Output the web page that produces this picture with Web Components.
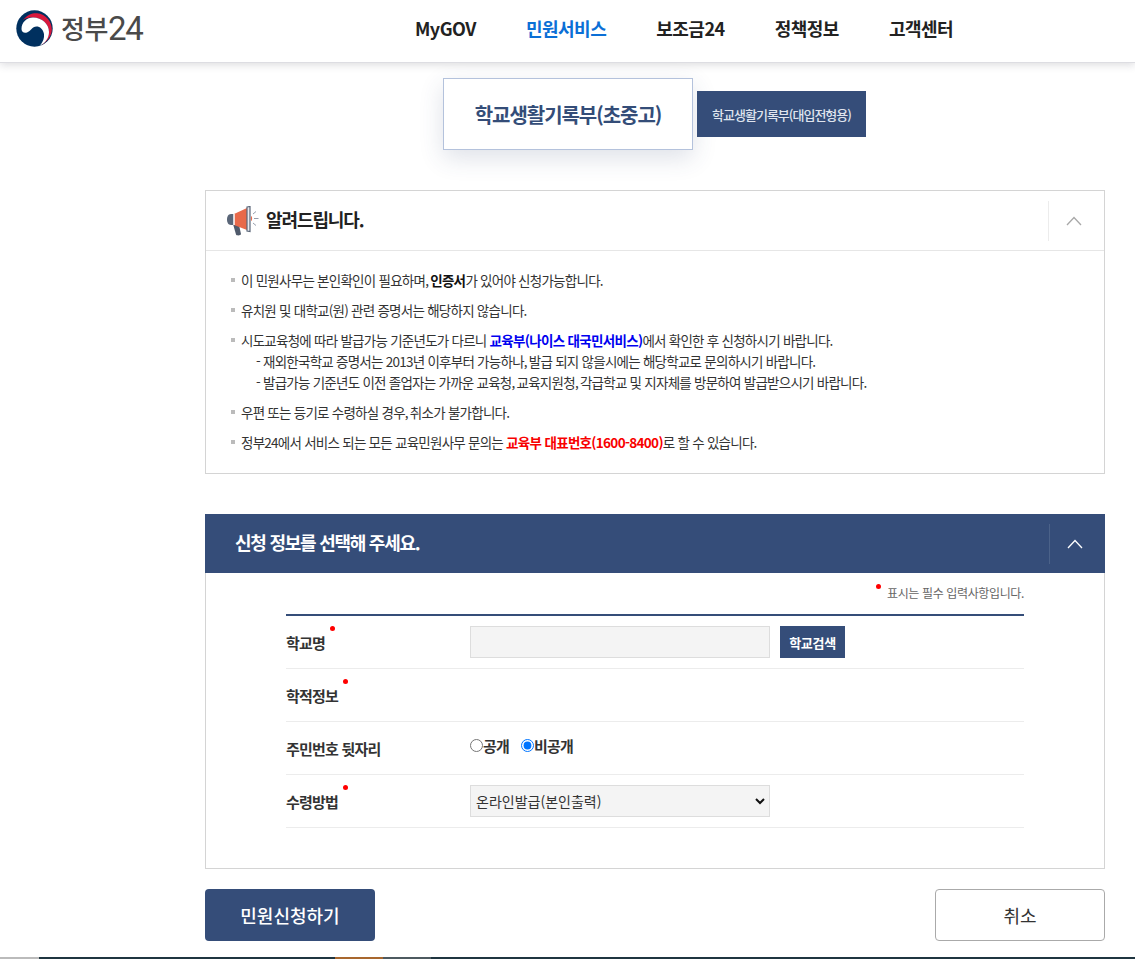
<!DOCTYPE html>
<html lang="ko">
<head>
<meta charset="utf-8">
<title>정부24</title>
<style>
    html, body { margin: 0; padding: 0; height: 959px; overflow: hidden; background: #fff; }
    body { font-family: "Noto Sans CJK KR", "Noto Sans", sans-serif; color: #222; }
    gov-page { height: 959px; }
</style>
</head>
<body>
<gov-page>
    <gov-header></gov-header>
    <gov-tabs></gov-tabs>
    <gov-notice></gov-notice>
    <gov-form></gov-form>
    <gov-actions></gov-actions>
    <gov-footer-strip></gov-footer-strip>
</gov-page>

<script>
const FONT = '"Noto Sans CJK KR", "Noto Sans", sans-serif';

function chevron(color) {
    return `<svg width="16" height="10" viewBox="0 0 16 10" fill="none"><path d="M1 9l7-7.5L15 9" stroke="${color}" stroke-width="1.3"/></svg>`;
}

class GovPage extends HTMLElement {
    constructor() {
        super();
        this.attachShadow({mode: 'open'}).innerHTML = `
            <style>
                :host { display: flex; flex-direction: column; position: relative; }
            </style>
            <slot></slot>
        `;
    }
}

class GovHeader extends HTMLElement {
    constructor() {
        super();
        this.attachShadow({mode: 'open'}).innerHTML = `
            <style>
                :host {
                    display: flex;
                    height: 62px;
                    background: #fff;
                    box-shadow: 0 1px 0 #dddde2, 0 3px 8px rgba(60,60,80,.18);
                    position: relative;
                    z-index: 2;
                    font-family: ${FONT};
                }
                .logo { display: flex; align-items: center; gap: 8px; width: 415px; padding-left: 16px; box-sizing: border-box; height: 56px; }
                .word { display: flex; align-items: center; color: #4a4a4a; line-height: 1; }
                .ko { font-size: 26px; font-weight: 500; letter-spacing: -.4px; }
                .num { font-family: Roboto, sans-serif; font-weight: 400; font-size: 33px; letter-spacing: -1.4px; }
                nav { display: flex; gap: 50px; height: 56px; align-items: center; font-size: 18px; font-weight: 700; color: #222; letter-spacing: -.5px; }
                nav .on { color: #0b6fd6; }
            </style>
            <div class="logo">
                <svg width="37" height="37" viewBox="0 0 37 37">
                    <circle cx="18.5" cy="18.5" r="18.2" fill="#00305f"/>
                    <path d="M7 10C11 4.500 17 2.800 21 3.200 30 4 35.800 11.500 35.800 19.500 35.800 26 31 32 25 35.300 29.500 32 33 27 33 22 33 14 26 7.500 17 7.500 13 7.500 10 8 7 10z" fill="#d8183c"/>
                    <path d="M5.500 19C5.500 12 11 7.500 17 7.500 26 7.500 33 14 33 22 33 28 29.500 33 24 35.500 27 32 28.500 28 28 24 27 19 24 16.500 20.500 16.500 16 16.500 15 21 11 22.500 8 23.500 5.500 22 5.500 19z" fill="#fff"/>
                </svg>
                <div class="word"><span class="ko">정부</span><span class="num">24</span></div>
            </div>
            <nav>
                <span>MyGOV</span>
                <span class="on">민원서비스</span>
                <span>보조금24</span>
                <span>정책정보</span>
                <span>고객센터</span>
            </nav>
        `;
    }
}

class GovTabs extends HTMLElement {
    constructor() {
        super();
        this.attachShadow({mode: 'open'}).innerHTML = `
            <style>
                :host {
                    display: flex;
                    align-items: center;
                    gap: 4px;
                    margin: 16px 0 40px 443px;
                    height: 72px;
                    font-family: ${FONT};
                }
                .active {
                    box-sizing: border-box;
                    width: 250px;
                    height: 72px;
                    display: flex; align-items: center; justify-content: center;
                    background: #fff;
                    border: 1px solid #b4c2dc;
                    box-shadow: 0 8px 24px rgba(50,70,110,.16);
                    color: #344d78;
                    font-size: 20px;
                    font-weight: 700;
                    letter-spacing: -1.05px;
                }
                .other {
                    width: 169px;
                    height: 46px;
                    display: flex; align-items: center; justify-content: center;
                    background: #354d79;
                    color: #dfe4ee;
                    font-size: 13px;
                    font-weight: 500;
                    letter-spacing: -1px;
                }
            </style>
            <div class="active">학교생활기록부(초중고)</div>
            <div class="other">학교생활기록부(대입전형용)</div>
        `;
    }
}

class GovNotice extends HTMLElement {
    constructor() {
        super();
        this.attachShadow({mode: 'open'}).innerHTML = `
            <style>
                :host {
                    display: block;
                    box-sizing: border-box;
                    width: 900px;
                    height: 284px;
                    margin-left: 205px;
                    border: 1px solid #d4d4d4;
                    font-family: ${FONT};
                    color: #333;
                }
                header {
                    display: flex;
                    align-items: center;
                    height: 59px;
                    border-bottom: 1px solid #e6e6e6;
                    padding-left: 20px;
                }
                h2 { margin: 0 0 0 6px; padding-bottom: 3px; font-size: 18px; font-weight: 700; letter-spacing: -1.1px; color: #222; flex: 1; }
                .toggle { box-sizing: border-box; width: 56px; height: 40px; padding-right: 5px; border-left: 1px solid #ececec; display: flex; align-items: center; justify-content: center; }
                ul { margin: 0; padding: 19px 0 0 25px; list-style: none; font-size: 13.500px; letter-spacing: -.75px; line-height: 21px; }
                li { position: relative; padding-left: 10px; margin-bottom: 9px; }
                li::before { content: ""; position: absolute; left: 0; top: 8px; width: 4px; height: 4px; background: #bbb; }
                b { color: #111; letter-spacing: -.68px; }
                i { font-style: normal; letter-spacing: -1.8px; }
                .blue { color: #0000f0; }
                .red { color: #f80000; }
                .sub { display: block; padding-left: 15px; }
            </style>
            <header>
                <svg width="34" height="30" viewBox="0 0 34 30">
                    <path d="M7 18l6 1 2 9c.2 1.500-4.500 2-5 .5z" fill="#4f5a6b"/>
                    <path d="M5 8h3v11H5C2 19 1 16 1 13.500S2 8 5 8z" fill="#5a6678"/>
                    <path d="M8 8l13-6v22L8 19z" fill="#e8694a"/>
                    <path d="M8 8v11" stroke="#fff" stroke-width="1.500"/>
                    <path d="M21 1l3-.5v25l-3-.5z" fill="#e8e8ee" stroke="#5a6678" stroke-width="1.200"/>
                    <path d="M25 10c1.500.5 1.500 4.500 0 5z" fill="#e8694a"/>
                    <path d="M27 8l3-2.500M28 12.500h4.500M27 17l3 2.500" stroke="#8a93a3" stroke-width=".9"/>
                </svg>
                <h2>알려드립니다.</h2>
                <div class="toggle">${chevron('#a8a8a8')}</div>
            </header>
            <ul>
                <li>이 민원사무는 본인확인이 필요하며<i>,</i> <b>인증서</b>가 있어야 신청가능합니다.</li>
                <li>유치원 및 대학교(원) 관련 증명서는 해당하지 않습니다.</li>
                <li>시도교육청에 따라 발급가능 기준년도가 다르니 <b class="blue">교육부(나이스 대국민서비스)</b>에서 확인한 후 신청하시기 바랍니다.
                    <span class="sub">- 재외한국학교 증명서는 2013년 이후부터 가능하나<i>,</i> 발급 되지 않을시에는 해당학교로 문의하시기 바랍니다.</span>
                    <span class="sub">- 발급가능 기준년도 이전 졸업자는 가까운 교육청<i>,</i> 교육지원청<i>,</i> 각급학교 및 지자체를 방문하여 발급받으시기 바랍니다.</span>
                </li>
                <li>우편 또는 등기로 수령하실 경우<i>,</i> 취소가 불가합니다.</li>
                <li>정부24에서 서비스 되는 모든 교육민원사무 문의는 <b class="red">교육부 대표번호(1600-8400)</b>로 할 수 있습니다.</li>
            </ul>
        `;
    }
}

class GovRow extends HTMLElement {
    constructor() {
        super();
        const required = this.hasAttribute('required');
        this.attachShadow({mode: 'open'}).innerHTML = `
            <style>
                :host {
                    display: flex;
                    align-items: center;
                    box-sizing: border-box;
                    border-bottom: 1px solid #ececec;
                    height: 53px;
                    font-family: ${FONT};
                }
                .label {
                    width: 184px;
                    flex: none;
                    font-size: 15px;
                    font-weight: 700;
                    letter-spacing: -.8px;
                    color: #333;
                }
                .label span { position: relative; }
                .dot { position: absolute; right: -10px; top: -6px; width: 5px; height: 5px; border-radius: 50%; background: #f00; }
            </style>
            <div class="label"><span>${this.getAttribute('label')}${required ? '<i class="dot"></i>' : ''}</span></div>
            <slot></slot>
        `;
    }
}

class GovForm extends HTMLElement {
    constructor() {
        super();
        this.attachShadow({mode: 'open'}).innerHTML = `
            <style>
                :host {
                    display: block;
                    box-sizing: border-box;
                    width: 900px;
                    height: 355px;
                    margin: 40px 0 0 205px;
                    border: 1px solid #d4d4d4;
                    border-top: 0;
                    font-family: ${FONT};
                }
                header {
                    display: flex;
                    align-items: center;
                    height: 59px;
                    margin: 0 -1px;
                    background: #354d79;
                    color: #fff;
                    padding-left: 30px;
                }
                h2 { flex: 1; margin: 0; padding-bottom: 3px; font-size: 18px; font-weight: 700; letter-spacing: -1.25px; }
                .toggle { box-sizing: border-box; width: 56px; height: 40px; padding-right: 5px; border-left: 1px solid #4b6289; display: flex; align-items: center; justify-content: center; }
                .note { text-align: right; margin: 10px 80px 0 0; font-size: 12px; letter-spacing: -.37px; color: #666; line-height: 20px; height: 31px; }
                .note i { display: inline-block; width: 5px; height: 5px; border-radius: 50%; background: #f00; vertical-align: 9px; margin-right: 6px; }
                .rows { margin: 0 80px; border-top: 2px solid #354d79; }
                .field {
                    box-sizing: border-box;
                    width: 300px; height: 32px;
                    background: #f4f4f4;
                    border: 1px solid #ddd;
                }
                button.search {
                    margin-left: 10px;
                    width: 65px; height: 32px;
                    border: 0;
                    background: #354d79;
                    color: #fff;
                    font: 700 13px ${FONT};
                    letter-spacing: -.3px;
                }
                label { display: inline-flex; align-items: center; font-size: 15px; font-weight: 700; letter-spacing: -.8px; color: #333; margin-right: 12px; position: relative; top: -3px; }
                input[type=radio] { margin: 0; width: 13px; height: 13px; }
                select {
                    box-sizing: border-box;
                    width: 300px; height: 32px;
                    appearance: none;
                    background: #f4f4f4 url("data:image/svg+xml,%3Csvg xmlns='http://www.w3.org/2000/svg' width='10' height='7'%3E%3Cpath d='M1 1l4 4 4-4' fill='none' stroke='%23111' stroke-width='2'/%3E%3C/svg%3E") no-repeat right 4px center;
                    border: 1px solid #ddd;
                    border-radius: 0;
                    font: 14px ${FONT};
                    color: #333;
                    padding-left: 5px;
                }
            </style>
            <header>
                <h2>신청 정보를 선택해 주세요.</h2>
                <div class="toggle">${chevron('#fff')}</div>
            </header>
            <div class="note"><i></i>표시는 필수 입력사항입니다.</div>
            <div class="rows">
                <gov-row label="학교명" required><div class="field"></div><button class="search">학교검색</button></gov-row>
                <gov-row label="학적정보" required></gov-row>
                <gov-row label="주민번호 뒷자리">
                    <label><input type="radio" name="rrn">공개</label>
                    <label><input type="radio" name="rrn" checked>비공개</label>
                </gov-row>
                <gov-row label="수령방법" required>
                    <select><option>온라인발급(본인출력)</option></select>
                </gov-row>
            </div>
        `;
    }
}

class GovActions extends HTMLElement {
    constructor() {
        super();
        this.attachShadow({mode: 'open'}).innerHTML = `
            <style>
                :host {
                    display: flex;
                    justify-content: space-between;
                    width: 900px;
                    margin: 20px 0 0 205px;
                    font-family: ${FONT};
                }
                button {
                    box-sizing: border-box;
                    width: 170px; height: 52px;
                    border-radius: 4px;
                    font: 500 18px ${FONT};
                }
                .primary { background: #354d79; color: #fff; border: 0; }
                .cancel { background: #fff; color: #333; border: 1px solid #aaa; font-weight: 400; }
            </style>
            <button class="primary">민원신청하기</button>
            <button class="cancel">취소</button>
        `;
    }
}

class GovFooterStrip extends HTMLElement {
    constructor() {
        super();
        this.attachShadow({mode: 'open'}).innerHTML = `
            <style>
                :host { display: flex; height: 2px; margin-top: 16px; background: #1f3540; }
                .a { width: 39px; background: #bbb; }
                .b { width: 296px; }
                .c { width: 48px; background: #a8672e; }
                .d { width: 48px; background: #4e5a60; }
            </style>
            <div class="a"></div><div class="b"></div><div class="c"></div><div class="d"></div>
        `;
    }
}

customElements.define('gov-page', GovPage);
customElements.define('gov-header', GovHeader);
customElements.define('gov-tabs', GovTabs);
customElements.define('gov-notice', GovNotice);
customElements.define('gov-row', GovRow);
customElements.define('gov-form', GovForm);
customElements.define('gov-actions', GovActions);
customElements.define('gov-footer-strip', GovFooterStrip);
</script>
</body>
</html>
